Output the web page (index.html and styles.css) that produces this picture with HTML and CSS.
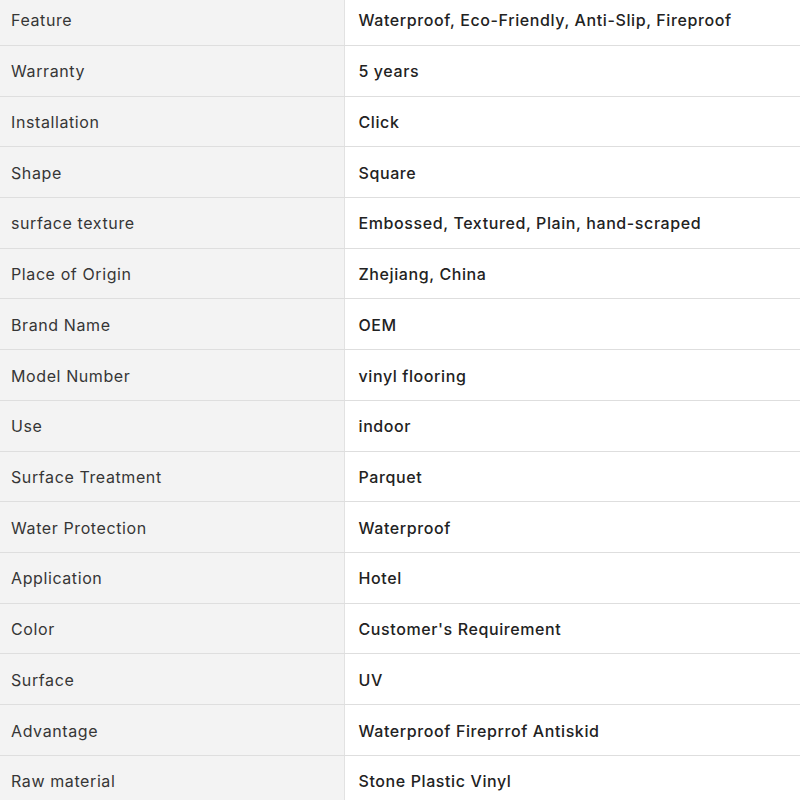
FILE: index.html
```html
<!DOCTYPE html>
<html lang="en">
<head>
<meta charset="utf-8">
<title>Specifications</title>
<link rel="stylesheet" href="styles.css">
</head>
<body>
<table class="spec">
<tbody>
<tr><td class="k">Feature</td><td class="v">Waterproof, Eco-Friendly, Anti-Slip, Fireproof</td></tr>
<tr><td class="k">Warranty</td><td class="v">5 years</td></tr>
<tr><td class="k">Installation</td><td class="v">Click</td></tr>
<tr><td class="k">Shape</td><td class="v">Square</td></tr>
<tr><td class="k">surface texture</td><td class="v">Embossed, Textured, Plain, hand-scraped</td></tr>
<tr><td class="k">Place of Origin</td><td class="v">Zhejiang, China</td></tr>
<tr><td class="k">Brand Name</td><td class="v">OEM</td></tr>
<tr><td class="k">Model Number</td><td class="v">vinyl flooring</td></tr>
<tr><td class="k">Use</td><td class="v">indoor</td></tr>
<tr><td class="k">Surface Treatment</td><td class="v">Parquet</td></tr>
<tr><td class="k">Water Protection</td><td class="v">Waterproof</td></tr>
<tr><td class="k">Application</td><td class="v">Hotel</td></tr>
<tr><td class="k">Color</td><td class="v">Customer's Requirement</td></tr>
<tr><td class="k">Surface</td><td class="v">UV</td></tr>
<tr><td class="k">Advantage</td><td class="v">Waterproof Fireprrof Antiskid</td></tr>
<tr><td class="k">Raw material</td><td class="v">Stone Plastic Vinyl</td></tr>
</tbody>
</table>
</body>
</html>
```
FILE: styles.css
```css
html, body {
  margin: 0;
  padding: 0;
  background: #ffffff;
  overflow: hidden;
}
.spec {
  width: 800px;
  margin-top: -5.4px;
  border-collapse: collapse;
  table-layout: fixed;
  font-family: Inter, "Noto Sans", sans-serif;
  font-size: 16px;
  line-height: 24px;
  letter-spacing: 0.6px;
}
.spec td {
  height: 50.72px;
  box-sizing: border-box;
  padding: 1px 0 0 0;
  vertical-align: middle;
  border-bottom: 1px solid #dedede;
}
.spec .k {
  width: 344px;
  padding-left: 11px;
  background: #f3f3f3;
  color: #363636;
  font-weight: 400;
  border-right: 1px solid #e2e2e2;
}
.spec .v {
  padding-left: 14px;
  color: #222222;
  font-weight: 500;
}
```
